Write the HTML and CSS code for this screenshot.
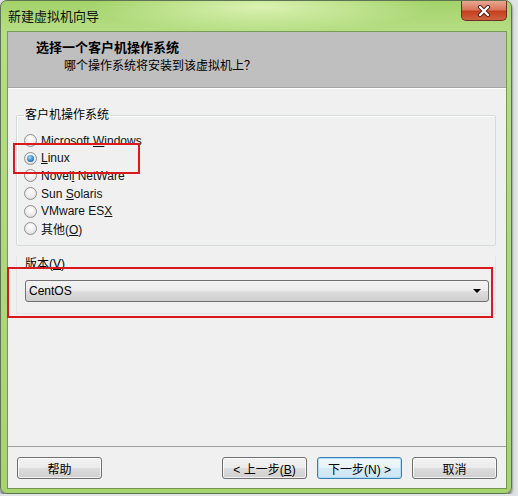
FILE: index.html
```html
<!DOCTYPE html>
<html lang="zh-CN">
<head>
    <meta charset="UTF-8">
    <title>新建虚拟机向导</title>
    <link rel="stylesheet" href="styles.css">
</head>
<body>

<div class="window">
    <!-- Barra de título -->
    <div class="titlebar">
        <span class="title">新建虚拟机向导</span>
        <span class="close">
            <svg width="14" height="12" viewBox="0 0 14 12">
                <path d="M3 2 L11 10 M11 2 L3 10" stroke="#4a2418" stroke-width="4" stroke-linecap="round"/>
                <path d="M3 2 L11 10 M11 2 L3 10" stroke="#ffffff" stroke-width="2.2" stroke-linecap="round"/>
            </svg>
        </span>
    </div>

    <div class="client">
        <div class="header">
            <div class="header-title">选择一个客户机操作系统</div>
            <div class="header-sub">哪个操作系统将安装到该虚拟机上？</div>
        </div>

        <div class="content">
            <fieldset class="group">
                <legend>客户机操作系统</legend>
                <div class="options">
                    <div class="option"><span class="radio"></span><span>Microsoft <u>W</u>indows</span></div>
                    <div class="option"><span class="radio checked"></span><span><u>L</u>inux</span></div>
                    <div class="option"><span class="radio"></span><span>Novel<u>l</u> NetWare</span></div>
                    <div class="option"><span class="radio"></span><span>Sun <u>S</u>olaris</span></div>
                    <div class="option"><span class="radio"></span><span>VMware ES<u>X</u></span></div>
                    <div class="option"><span class="radio"></span><span>其他(<u>O</u>)</span></div>
                </div>
            </fieldset>

            <div class="version">
                <div class="version-label">版本(<u>V</u>)</div>
                <div class="combo">
                    <span>CentOS</span>
                    <span class="arrow"></span>
                </div>
            </div>
        </div>

        <div class="footer">
            <button>帮助</button>
            <span class="spacer"></span>
            <button>&lt; 上一步(<u>B</u>)</button>
            <button class="default">下一步(N) &gt;</button>
            <button>取消</button>
        </div>

        <!-- marcas rojas encima del diálogo -->
        <div class="mark mark-linux"></div>
        <div class="mark mark-version"></div>
    </div>
</div>

</body>
</html>
```

FILE: styles.css
```css
/* Ventana estilo Windows 7, tema verde */
:root {
    --fondo-cliente: #f0f0f0;
    --gris-cabecera: #bfbfbf;
    --borde-boton: #707070;
    --rojo-marca: #d9191c;
}

body {
    margin: 0;
    padding: 0;
    background-color: #dfe3e3;
    font-family: "Liberation Sans", "Noto Sans CJK SC", sans-serif;
    font-size: 12px;
    color: #000;
}

.window {
    width: 512px;
    height: 494px;
    box-sizing: border-box;
    padding: 0 5px 5px 7px;
    border: 1px solid #5f7552;
    border-radius: 7px;
    background:
        radial-gradient(ellipse 170px 26px at 260px 6px, rgba(228, 248, 190, 0.85), rgba(228, 248, 190, 0)),
        linear-gradient(to bottom, #a3d26a 0, #b6de84 30px, #acd879 60%, #a6d46f 100%);
    box-shadow: 0 2px 3px rgba(0, 0, 0, 0.6);
}

.titlebar {
    height: 31px;
    display: flex;
    align-items: flex-start;
}

.title {
    font-size: 13px;
    line-height: 16px;
    margin-top: 8px;
    color: #111;
}

.close {
    margin-left: auto;
    margin-right: -1px;
    width: 46px;
    height: 20px;
    box-sizing: border-box;
    border: 1px solid #6b3022;
    border-top: none;
    border-radius: 0 0 5px 5px;
    background: linear-gradient(to bottom, #e9a793 0, #d9765c 45%, #c4401f 55%, #d1623e 100%);
    display: flex;
    align-items: center;
    justify-content: center;
}

.client {
    position: relative;
    height: 456px;
    background-color: var(--fondo-cliente);
    box-shadow: 0 0 0 1px rgba(70, 100, 50, 0.55);
    display: flex;
    flex-direction: column;
}

.header {
    height: 55px;
    background-color: var(--gris-cabecera);
    border-bottom: 1px solid #a4a4a4;
    box-shadow: 0 1px 0 #ffffff;
}

.header-title {
    font-weight: bold;
    font-size: 13px;
    line-height: 16px;
    padding-top: 8px;
    margin-left: 28px;
}

.header-sub {
    font-size: 12px;
    line-height: 16px;
    margin-top: 2px;
    margin-left: 56px;
}

.content {
    flex: 1;
}

.group {
    margin: 20px 10px 0 8px;
    padding: 0;
    border: 1px solid #d5dadc;
    box-shadow: inset 1px 1px 0 #ffffff;
    border-radius: 2px;
}

.group legend {
    padding: 0 1px;
    margin-left: 7px;
    line-height: 14px;
    font-size: 12px;
}

.options {
    padding: 10px 0 7px 7px;
}

.option {
    height: 17.6px;
    display: flex;
    align-items: center;
    font-size: 12px;
    color: #111;
}

.radio {
    position: relative;
    width: 13px;
    height: 13px;
    box-sizing: border-box;
    border: 1px solid #8e8f8f;
    border-radius: 50%;
    background: radial-gradient(circle at 50% 35%, #ffffff 0, #ececec 55%, #d0d0d0 100%);
    margin-right: 4px;
    flex-shrink: 0;
}

.radio.checked::after {
    content: "";
    position: absolute;
    left: 2px;
    top: 2px;
    width: 7px;
    height: 7px;
    border-radius: 50%;
    background: radial-gradient(circle at 40% 35%, #a8dcf8 0, #3d8fd0 50%, #14508c 100%);
}

.version {
    margin: 10px 10px 0 8px;
    padding: 0 6px 11px 8px;
    border: 1px solid #e2e4e5;
    border-top-color: transparent;
}

.version-label {
    line-height: 14px;
    font-size: 12px;
}

.combo {
    margin-top: 9px;
    height: 22px;
    box-sizing: border-box;
    border: 1px solid var(--borde-boton);
    border-radius: 3px;
    background: linear-gradient(to bottom, #f3f3f3 0, #ebebeb 50%, #dddddd 51%, #cfcfcf 100%);
    display: flex;
    align-items: center;
    padding: 0 7px 0 3px;
    font-size: 12px;
}

.combo .arrow {
    margin-left: auto;
    width: 0;
    height: 0;
    border-left: 4px solid transparent;
    border-right: 4px solid transparent;
    border-top: 4px solid #000;
}

.footer {
    height: 42px;
    box-sizing: border-box;
    border-top: 1px solid #a0a0a0;
    display: flex;
    align-items: flex-start;
    gap: 10px;
    padding: 10px 9px 0 9px;
}

.spacer {
    flex: 1;
}

button {
    width: 85px;
    height: 22px;
    padding: 0;
    border: 1px solid var(--borde-boton);
    border-radius: 3px;
    background: linear-gradient(to bottom, #f2f2f2 0, #ebebeb 50%, #dddddd 51%, #cfcfcf 100%);
    font-family: "Liberation Sans", "Noto Sans CJK SC", sans-serif;
    font-size: 12px;
    color: #000;
    box-shadow: inset 0 0 0 1px rgba(255, 255, 255, 0.7);
}

button.default {
    border-color: #3c7fb1;
    background: linear-gradient(to bottom, #f2f8fc 0, #e6f2fa 50%, #d7ebf7 51%, #cde4f3 100%);
    box-shadow: inset 0 0 0 1px #a9dcf6;
}

.mark {
    position: absolute;
    box-sizing: border-box;
    border: 2px solid var(--rojo-marca);
}

.mark-linux {
    left: 5px;
    top: 111px;
    width: 127px;
    height: 31px;
}

.mark-version {
    left: -1px;
    top: 235px;
    width: 486px;
    height: 51px;
}
```
